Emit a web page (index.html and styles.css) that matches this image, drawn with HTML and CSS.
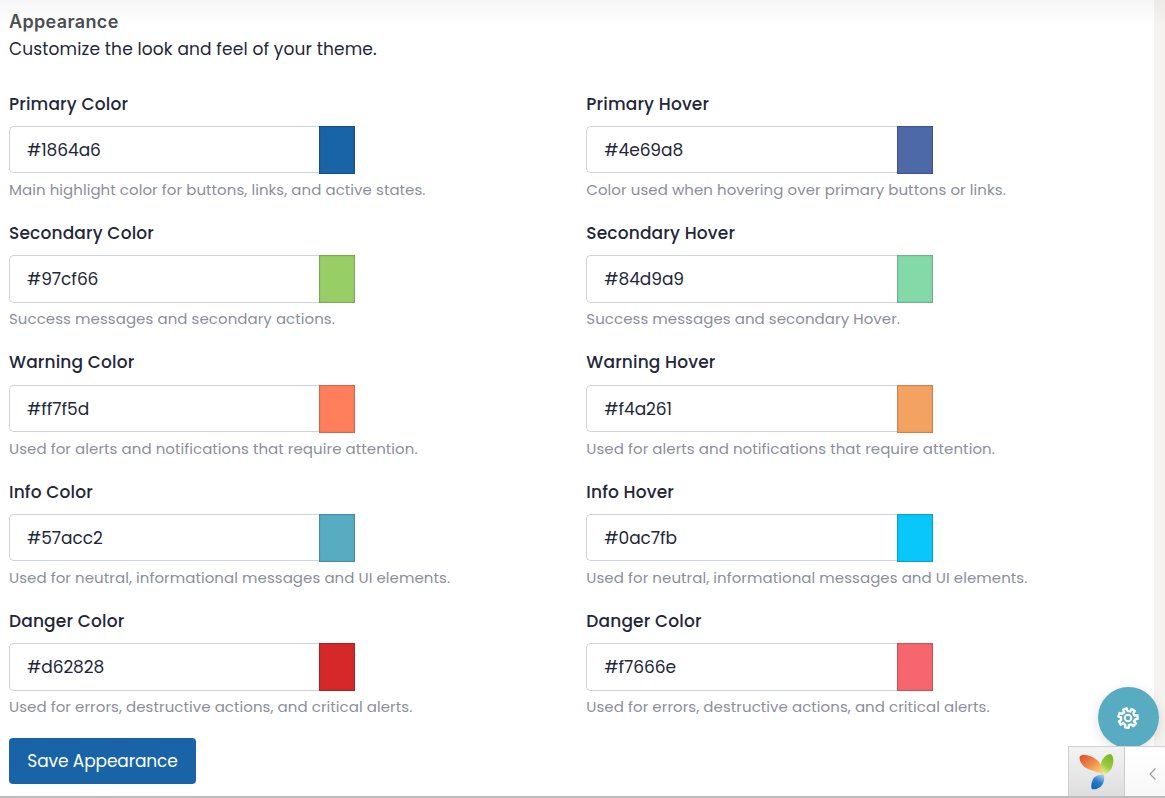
FILE: index.html
```html
<!DOCTYPE html>
<html lang="en">
<head>
<meta charset="utf-8">
<title>Appearance</title>
<link rel="stylesheet" href="styles.css">
</head>
<body>
<main class="page">
  <header class="intro">
    <h1 class="title">Appearance</h1>
    <p class="lead">Customize the look and feel of your theme.</p>
  </header>
  <form class="grid">
    <div class="field"><label class="label">Primary Color</label><div class="control"><span class="value">#1864a6</span><span class="swatch primary"></span></div><p class="hint">Main highlight color for buttons, links, and active states.</p></div>
    <div class="field"><label class="label">Primary Hover</label><div class="control"><span class="value">#4e69a8</span><span class="swatch primary-hover"></span></div><p class="hint">Color used when hovering over primary buttons or links.</p></div>
    <div class="field"><label class="label">Secondary Color</label><div class="control"><span class="value">#97cf66</span><span class="swatch secondary"></span></div><p class="hint">Success messages and secondary actions.</p></div>
    <div class="field"><label class="label">Secondary Hover</label><div class="control"><span class="value">#84d9a9</span><span class="swatch secondary-hover"></span></div><p class="hint">Success messages and secondary Hover.</p></div>
    <div class="field"><label class="label">Warning Color</label><div class="control"><span class="value">#ff7f5d</span><span class="swatch warning"></span></div><p class="hint">Used for alerts and notifications that require attention.</p></div>
    <div class="field"><label class="label">Warning Hover</label><div class="control"><span class="value">#f4a261</span><span class="swatch warning-hover"></span></div><p class="hint">Used for alerts and notifications that require attention.</p></div>
    <div class="field"><label class="label">Info Color</label><div class="control"><span class="value">#57acc2</span><span class="swatch info"></span></div><p class="hint">Used for neutral, informational messages and UI elements.</p></div>
    <div class="field"><label class="label">Info Hover</label><div class="control"><span class="value">#0ac7fb</span><span class="swatch info-hover"></span></div><p class="hint">Used for neutral, informational messages and UI elements.</p></div>
    <div class="field"><label class="label">Danger Color</label><div class="control"><span class="value">#d62828</span><span class="swatch danger"></span></div><p class="hint">Used for errors, destructive actions, and critical alerts.</p></div>
    <div class="field"><label class="label">Danger Color</label><div class="control"><span class="value">#f7666e</span><span class="swatch danger-hover"></span></div><p class="hint">Used for errors, destructive actions, and critical alerts.</p></div>
  </form>
  <button class="save" type="button">Save Appearance</button>
</main>
<div class="gutter"></div>
<div class="topshade"></div>
<div class="settings">
  <svg width="24" height="24" viewBox="-12 -12 24 24" fill="none" stroke="#fff" stroke-width="2.3" stroke-linejoin="round" stroke-linecap="round">
    <defs><path id="tooth" d="M6.9-2L9.6-1.900V1.900L6.900 2L5.500 4.400"/></defs>
    <g transform="rotate(-6)">
      <use href="#tooth"/>
      <use href="#tooth" transform="rotate(51.43)"/>
      <use href="#tooth" transform="rotate(102.86)"/>
      <use href="#tooth" transform="rotate(154.29)"/>
      <use href="#tooth" transform="rotate(205.71)"/>
      <use href="#tooth" transform="rotate(257.14)"/>
      <use href="#tooth" transform="rotate(308.57)"/>
    </g>
    <circle r="3.3" stroke-width="2"/>
  </svg>
</div>
<div class="debugbar">
  <div class="brand">
    <svg width="36" height="38" viewBox="0 0 36 38">
      <defs>
        <linearGradient id="orange" x1="0" y1="0" x2="1" y2="1"><stop offset="0" stop-color="#df4b29"/><stop offset=".5" stop-color="#f18f4d"/><stop offset="1" stop-color="#ffe680"/></linearGradient>
        <linearGradient id="green" x1=".7" y1="0" x2=".3" y2="1"><stop offset="0" stop-color="#78b82a"/><stop offset=".55" stop-color="#9bcb3c"/><stop offset="1" stop-color="#f4f6a0"/></linearGradient>
        <linearGradient id="blue" x1=".8" y1="0" x2=".3" y2="1"><stop offset="0" stop-color="#a5d5ef"/><stop offset=".5" stop-color="#2e7fca"/><stop offset="1" stop-color="#0968b4"/></linearGradient>
      </defs>
      <path d="M.5 3C2-.5 12 1 18 6C22 9.500 24 15 24.500 21C19 17.500 15 17.500 9 15C4 13 .5 8 .5 3Z" fill="url(#orange)"/>
      <path d="M31.500 .1C35 1.500 35.200 9 32.500 14.500C30.500 18 27 19 25.500 22C25 17 21 15 22 9.500C23 4.500 27.500 .3 31.500 .1Z" fill="url(#green)"/>
      <path d="M24.500 20C26.200 25 24.700 31 20.500 33.500C17.500 35.500 13.300 36 12.600 34.500C11.800 31 12.800 25 16.500 22.500C19 20.700 22 21.300 24.500 20Z" fill="url(#blue)"/>
    </svg>
  </div>
  <div class="toggle"><svg width="8" height="14" viewBox="0 0 8 14" fill="none" stroke="#999" stroke-width="1.1"><path d="M6.500 1.500L1 7l5.500 5.500"/></svg></div>
</div>
<div class="baseline"></div>
</body>
</html>
```
FILE: styles.css
```css
* { box-sizing: border-box; }
body { margin: 0; width: 1165px; height: 798px; overflow: hidden; background: #fff; color: #23273a; font-family: Poppins, Inter, sans-serif; }
.page { padding: 9px 0 0 9px; }
.intro { height: 82.8px; }
.title { margin: 0; font: 600 18px/25px Inter, sans-serif; color: #4b4d51; letter-spacing: .35px; }
.lead { margin: 3px 0 0; font-size: 17px; line-height: 25px; letter-spacing: .135px; }
.grid { display: grid; grid-template-columns: 577.3px 568px; grid-auto-rows: 129.35px; height: 646.2px; }
.label { display: block; font-size: 17px; font-weight: 500; line-height: 24px; letter-spacing: .16px; }
.control { display: flex; justify-content: space-between; margin-top: 10.2px; width: 346.4px; height: 47.33px; border: 1px solid #cfd3dc; border-right: 0; border-radius: 5px 0 0 5px; }
.value { padding-left: 17px; font-size: 17px; line-height: 46px; letter-spacing: -.06px; }
.swatch { width: 36px; height: 48px; margin-top: -1px; box-shadow: inset 0 0 0 1px rgba(0,0,0,.12), inset 0 0 3px rgba(0,0,0,.18); }
.primary { background: #1864a6; }
.primary-hover { background: #4e69a8; }
.secondary { background: #97cf66; }
.secondary-hover { background: #84d9a9; }
.warning { background: #ff7f5d; }
.warning-hover { background: #f4a261; }
.info { background: #57acc2; }
.info-hover { background: #0ac7fb; }
.danger { background: #d62828; }
.danger-hover { background: #f7666e; }
.hint { margin: 5.8px 0 0; font-size: 15px; line-height: 22px; letter-spacing: .06px; color: #8b8e9b; white-space: nowrap; }
.save { display: block; width: 187px; height: 46px; padding: 0; border: 0; border-radius: 4px; background: #1864a6; color: #fff; font: 400 17px/46px Poppins, Inter, sans-serif; letter-spacing: -.12px; }
.gutter { position: absolute; top: 0; right: 0; width: 11px; height: 798px; background: #f6f2ef; }
.topshade { position: absolute; top: 0; left: 0; width: 1165px; height: 26px; background: linear-gradient(rgba(0,0,0,.035), rgba(0,0,0,0)); }
.settings { position: absolute; left: 1098px; top: 687px; width: 61px; height: 61px; padding-right: 1px; border-radius: 50%; background: #57acc2; display: grid; place-items: center; box-shadow: 0 3px 12px rgba(0,0,0,.13); }
.debugbar { position: absolute; left: 1068px; top: 746px; width: 97px; height: 50px; display: flex; border: solid #d0d0d0; border-width: 1px 0 0 1px; background: linear-gradient(#fff, #f7f7f7); }
.brand { width: 56px; border-right: 1px solid #ccc; background: linear-gradient(#f3f3f3, #dedede); padding: 7px 0 0 10px; }
.toggle { flex: 1; padding: 20px 0 0 24px; }
.toggle svg, .brand svg { display: block; }
.baseline { position: absolute; left: 0; top: 796px; width: 1165px; height: 2px; background: #bdbdbd; }
```
